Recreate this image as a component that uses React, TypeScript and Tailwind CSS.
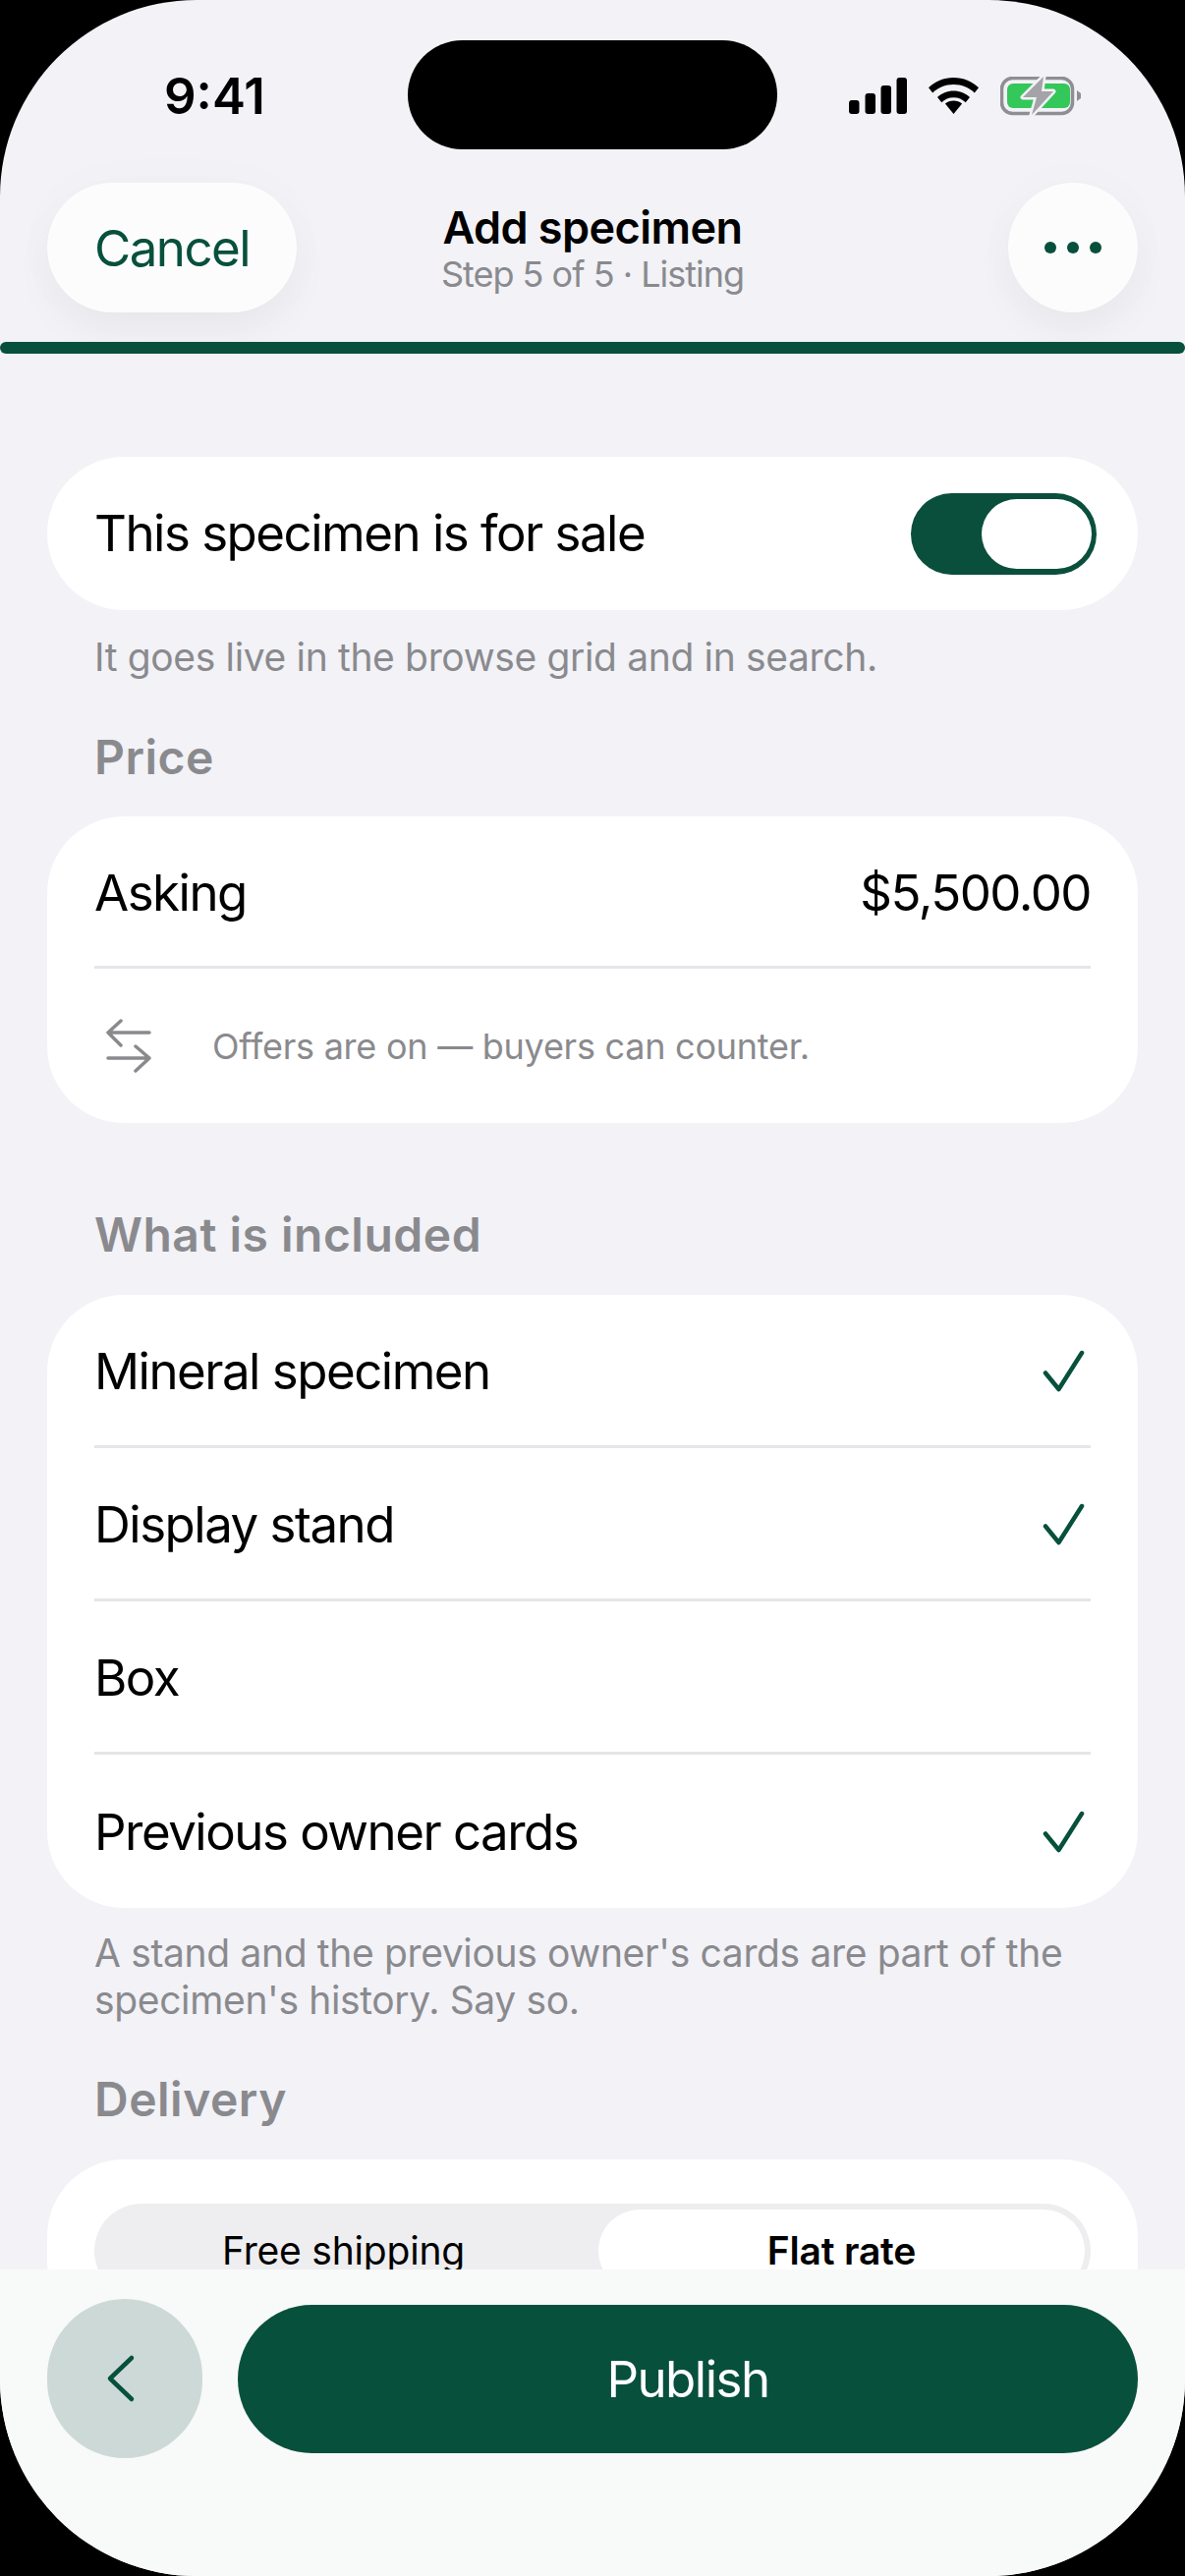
const font = "font-['Inter','Noto_Sans',sans-serif]";

function StatusIcons() {
  return (
    <div className="flex items-start">
      {/* signal */}
      <svg width="59" height="37" viewBox="0 0 59 37" className="mt-[1px] mr-[22px]">
        <rect x="0" y="23" width="10.5" height="14" rx="3" fill="#000" />
        <rect x="16.5" y="16" width="10.5" height="21" rx="3" fill="#000" />
        <rect x="32.5" y="8" width="10.5" height="29" rx="3" fill="#000" />
        <rect x="48.5" y="0" width="10.5" height="37" rx="3" fill="#000" />
      </svg>
      {/* wifi */}
      <svg width="51" height="37" viewBox="0 0 51 37" className="mt-[1px] mr-[22px]">
        <path d="M25.5 0C15.5 0 6.6 3.900 0 10.200l4.200 5.200C9.600 10.200 17.100 7 25.500 7s15.900 3.200 21.300 8.400l4.200-5.200C44.400 3.900 35.500 0 25.500 0Z" fill="#000" />
        <path d="M25.5 13.500c-6.400 0-12.200 2.500-16.500 6.500l4.300 5.300c3.100-3.100 7.400-5 12.200-5s9.100 1.900 12.200 5l4.300-5.300c-4.300-4-10.100-6.500-16.500-6.500Z" fill="#000" />
        <path d="M25.5 37l-8.600-10.400c2.300-1.900 5.300-3 8.600-3s6.300 1.100 8.600 3L25.500 37Z" fill="#000" />
      </svg>
      {/* battery */}
      <svg width="82" height="40" viewBox="0 0 82 40">
        <rect x="1.500" y="1.500" width="72" height="36" rx="11" fill="none" stroke="#8e8e93" strokeWidth="3.500" />
        <rect x="7" y="7" width="64" height="25" rx="6" fill="#34c759" />
        <path d="M78 14l4 3v5l-4 3Z" fill="#8e8e93" />
        <path d="M44 0 23 21H37L32 39 54 15H42Z" fill="#a3a3a8" stroke="#f2f2f7" strokeWidth="5" strokeLinejoin="round" paintOrder="stroke" />
      </svg>
    </div>
  );
}

function Check() {
  return (
    <svg width="44" height="44" viewBox="0 0 44 44" fill="none" stroke="#07503c" strokeWidth="4.500" strokeLinecap="round" strokeLinejoin="round">
      <path d="M3 23.500 16.500 40 40 3" />
    </svg>
  );
}

function SectionLabel({ children, className }: { children: string; className: string }) {
  return <div className={`px-[48px] text-[48px] leading-[58px] font-semibold tracking-[0.5px] text-[#8a8a8e] ${className}`}>{children}</div>;
}

const items = [
  { label: "Mineral specimen", on: true },
  { label: "Display stand", on: true },
  { label: "Box", on: false },
  { label: "Previous owner cards", on: true },
];

export default function App() {
  return (
    <div className={`h-[2622px] w-[1206px] overflow-hidden bg-black ${font}`}>
      <div className="flex h-full flex-col overflow-hidden rounded-[200px] bg-[#f2f2f7]">
        {/* status bar */}
        <div className="grid h-[186px] shrink-0 grid-cols-[1fr_auto_1fr] items-start px-[106px]">
          <div className="mt-[68px] ml-[61px] text-[51px] leading-[60px] font-semibold text-black">9:41</div>
          <div className="mt-[41px] h-[111px] w-[376px] rounded-full bg-black" />
          <div className="mt-[78px] justify-self-end">
            <StatusIcons />
          </div>
        </div>

        {/* nav */}
        <div className="grid h-[132px] shrink-0 grid-cols-[1fr_auto_1fr] items-center px-[48px]">
          <button type="button" className="flex h-[132px] w-[254px] items-center justify-center rounded-full bg-[#fcfcfd] pt-[2px] text-[51px] leading-[60px] tracking-[-1.5px] text-[#07503c] shadow-[0_20px_40px_rgba(0,0,0,0.04),0_0_60px_rgba(0,0,0,0.02)]">
            Cancel
          </button>
          <div className="flex flex-col items-center">
            <div className="text-[45px] leading-[54px] font-semibold tracking-[-0.55px] text-black">Add specimen</div>
            <div className="text-[36px] leading-[40px] tracking-[-1px] text-[#8a8a8e]">Step 5 of 5 · Listing</div>
          </div>
          <button type="button" className="flex h-[132px] w-[132px] items-center justify-center gap-[11px] justify-self-end rounded-full bg-[#fcfcfd] shadow-[0_20px_40px_rgba(0,0,0,0.04),0_0_60px_rgba(0,0,0,0.02)]">
            <span className="h-[12px] w-[12px] rounded-full bg-[#07503c]" />
            <span className="h-[12px] w-[12px] rounded-full bg-[#07503c]" />
            <span className="h-[12px] w-[12px] rounded-full bg-[#07503c]" />
          </button>
        </div>

        {/* step progress */}
        <div className="relative mt-[30px] h-[12px] w-full shrink-0 rounded-full bg-[#07503c]" />

        {/* scrolled content */}
        <div className="flex min-h-0 flex-1 flex-col overflow-hidden px-[48px] pt-[105px]">
          <div className="flex h-[156px] shrink-0 items-center justify-between rounded-[78px] bg-white pr-[42px] pl-[48px]">
            <span className="text-[51px] leading-[60px] tracking-[-1.5px] text-black">This specimen is for sale</span>
            <div className="flex h-[83px] w-[189px] items-center justify-end rounded-full bg-[#0a4f3c] pr-[5px]">
              <div className="h-[71px] w-[112px] rounded-full bg-white" />
            </div>
          </div>
          <p className="mt-[24px] px-[48px] text-[39px] leading-[48px] tracking-[-0.35px] text-[#8a8a8e]">It goes live in the browse grid and in search.</p>

          <SectionLabel className="mt-[49px]">Price</SectionLabel>
          <div className="mt-[31px] shrink-0 rounded-[78px] bg-white px-[48px]">
            <div className="flex h-[155px] items-center justify-between border-b-[3px] border-[#e5e5ea] pt-[3px] text-[51px] leading-[60px] tracking-[-1.5px] text-black">
              <span>Asking</span>
              <span>$5,500.00</span>
            </div>
            <div className="flex h-[157px] items-center gap-[62px] pl-[12px]">
              <svg width="46" height="56" viewBox="0 0 46 56" fill="none" stroke="#8a8a8e" strokeWidth="3.500" strokeLinecap="round" strokeLinejoin="round" className="shrink-0">
                <path d="M44 14H2M15 2 2 14l13 13" />
                <path d="M2 40h42M30 28l14 12-14 13" />
              </svg>
              <span className="text-[36px] leading-[44px] tracking-[-0.25px] text-[#8a8a8e]">Offers are on — buyers can counter.</span>
            </div>
          </div>

          <SectionLabel className="mt-[85px]">What is included</SectionLabel>
          <div className="mt-[32px] shrink-0 rounded-[78px] bg-white px-[48px]">
            {items.map((item, i) => (
              <div key={item.label} className={`flex h-[156px] items-center justify-between pt-[2px] text-[51px] leading-[60px] tracking-[-1.5px] text-black ${i < 3 ? "border-b-[3px] border-[#e5e5ea]" : ""}`}>
                <span>{item.label}</span>
                {item.on && (
                  <span className="mr-[5px]">
                    <Check />
                  </span>
                )}
              </div>
            ))}
          </div>
          <p className="mt-[22px] px-[48px] text-[39px] leading-[48px] tracking-[-0.35px] text-[#8a8a8e]">A stand and the previous owner's cards are part of the specimen's history. Say so.</p>

          <SectionLabel className="mt-[48px]">Delivery</SectionLabel>
          <div className="mt-[32px] shrink-0 rounded-[78px] bg-white px-[48px] pt-[45px] pb-[40px]">
            <div className="grid h-[96px] grid-cols-2 gap-[12px] rounded-full bg-[#eeeef0] p-[6px] text-[39px] leading-[48px] tracking-[-0.2px] text-black">
              <div className="flex items-center justify-center">Free shipping</div>
              <div className="flex items-center justify-center rounded-full bg-white font-semibold">Flat rate</div>
            </div>
          </div>
        </div>

        {/* footer actions */}
        <div className="flex h-[312px] shrink-0 items-start gap-[36px] bg-[#f8f9f9] px-[48px] pt-[30px]">
          <button type="button" className="flex h-[162px] w-[158px] shrink-0 items-center justify-center rounded-full bg-[#cdd9d6]">
            <svg width="30" height="50" viewBox="0 0 30 50" fill="none" stroke="#07503c" strokeWidth="4.500" strokeLinecap="round" strokeLinejoin="round" className="mr-[9px]">
              <path d="M26 4 4 25l22 21" />
            </svg>
          </button>
          <button type="button" className="mt-[6px] flex h-[151px] flex-1 items-center justify-center rounded-[76px] bg-[#07503c] text-[51px] leading-[60px] tracking-[-1.5px] text-white">
            Publish
          </button>
        </div>
      </div>
    </div>
  );
}
